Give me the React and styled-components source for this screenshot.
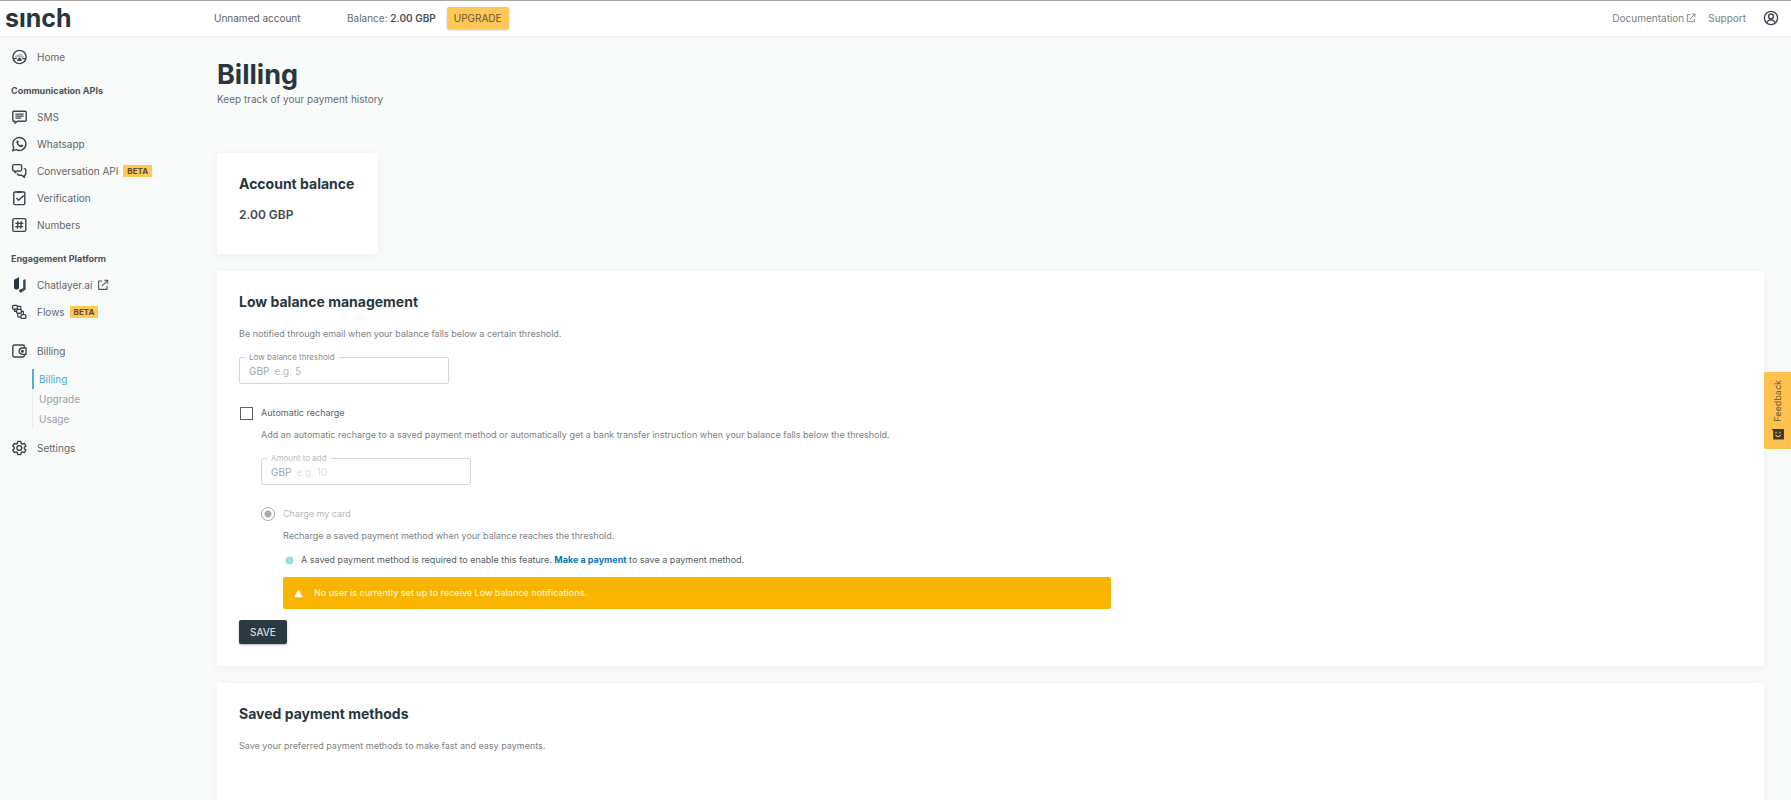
import React, { useState } from "react";
import styled, { createGlobalStyle } from "styled-components";

const GlobalStyle = createGlobalStyle`
	* {
		box-sizing: border-box;
	}

	body {
		margin: 0;
		background-color: #f9fafa;
		color: #666d70;
		font-family: Inter, "Liberation Sans", sans-serif;
		font-size: 10px;
		line-height: 14px;
	}

	a {
		color: inherit;
		text-decoration: none;
	}

	h1, h2, h3, p, ul {
		margin: 0;
		padding: 0;
	}

	button, input {
		font-family: inherit;
	}
`;

const Page = styled.div`
	display: flex;
	flex-direction: column;
	min-height: 100vh;
`;

const Header = styled.header`
	display: flex;
	align-items: center;
	height: 36px;
	padding: 0 12px 2px 5px;
	border-top: 1px solid #a9a7a8;
	background-color: #fff;
	box-shadow: 0 1px 2px rgba(40, 55, 62, 0.06);
`;

const Logo = styled.a`
	width: 209px;
	color: #28373e;
	font-size: 25px;
	font-weight: 700;
	line-height: 32px;
`;

const AccountName = styled.span`
	width: 133px;
	color: #5b6367;
	font-size: 10px;
`;

const Balance = styled.span`
	margin-right: 11px;
	font-size: 10px;

	strong {
		color: #4a5357;
		font-weight: 600;
	}
`;

const UpgradeButton = styled.button`
	height: 22px;
	padding: 0 7px;
	border: none;
	border-radius: 2px;
	background-color: #ffc658;
	color: #6b5a36;
	font-size: 10px;
	box-shadow: 0 1px 2px rgba(0, 0, 0, 0.25);
`;

const HeaderLinks = styled.nav`
	display: flex;
	align-items: center;
	gap: 12px;
	margin-left: auto;
	color: #7b8184;
`;

const HeaderLink = styled.a`
	display: flex;
	align-items: center;
	gap: 2px;
`;

const ProfileButton = styled.button`
	display: flex;
	margin-left: 5px;
	padding: 0;
	border: none;
	background: none;
	color: #3c484e;
`;

const Body = styled.div`
	display: flex;
	flex: 1;
`;

const Sidebar = styled.nav`
	flex: none;
	width: 217px;
	padding: 7px 11px;
`;

const NavItem = styled.a`
	display: flex;
	align-items: center;
	height: 27px;
	margin-top: ${(props) => (props.$spaced ? "12px" : "0")};
	color: #5f676a;

	> svg:first-child {
		flex: none;
		margin-right: 10px;
		color: #39464c;
	}
`;

const NavHeading = styled.h3`
	padding: 14px 0 6px;
	color: #4a5458;
	font-size: 9px;
	font-weight: 700;
	line-height: 13px;
`;

const Beta = styled.span`
	margin-left: 5px;
	padding: 0 4px;
	background-color: #ffc658;
	color: #5c4d2c;
	font-size: 8px;
	font-weight: 700;
	line-height: 12px;
`;

const ExternalMark = styled.span`
	display: flex;
	margin-left: 5px;
	color: #4a5458;
`;

const SubNav = styled.ul`
	margin: 5px 0 5px 21px;
	list-style: none;
`;

const SubNavLink = styled.a`
	display: block;
	padding-left: ${(props) => (props.$active ? "5px" : "6px")};
	border-left: ${(props) =>
		props.$active ? "2px solid #55abd6" : "1px solid #e9ebec"};
	color: ${(props) => (props.$active ? "#4ba5d3" : "#999fa1")};
	line-height: 20px;
`;

const Main = styled.main`
	display: flex;
	flex: 1;
	flex-direction: column;
	min-width: 0;
	padding: 22px 27px 0 0;
`;

const Title = styled.h1`
	color: #28373e;
	font-size: 27px;
	font-weight: 700;
	line-height: 34px;
`;

const Subtitle = styled.p`
	margin-bottom: 47px;
`;

const Card = styled.section`
	align-self: ${(props) => (props.$fit ? "flex-start" : "stretch")};
	flex: ${(props) => (props.$grow ? "1" : "none")};
	margin-bottom: ${(props) => (props.$grow ? "0" : "17px")};
	padding: ${(props) => (props.$fit ? "22px 24px 31px 22px" : "22px")};
	background-color: #fff;
	box-shadow: 0 2px 10px rgba(40, 55, 62, 0.05);
`;

const CardTitle = styled.h2`
	margin-bottom: 12px;
	color: #28373e;
	font-size: 14px;
	font-weight: 700;
	line-height: 18px;
`;

const Amount = styled.p`
	padding-top: 2px;
	color: #3f4b50;
	font-size: 12px;
	font-weight: 600;
	line-height: 16px;
`;

const Text = styled.p`
	padding-top: ${(props) => (props.$tight ? "0" : "4px")};
	color: #7c8285;
	font-size: 9px;
	line-height: 14px;
`;

const Field = styled.div`
	position: relative;
	display: flex;
	align-items: center;
	width: 210px;
	height: 27px;
	margin-top: 16px;
	padding: 0 9px;
	border: 1px solid #d4d7d8;
	border-radius: 2px;
	color: #a0a5a7;
`;

const FieldLabel = styled.label`
	position: absolute;
	top: -6px;
	left: 5px;
	padding: 0 4px;
	background-color: #fff;
	color: ${(props) => (props.$disabled ? "#b9bdbe" : "#8b9193")};
	font-size: 8px;
	line-height: 10px;
`;

const FieldInput = styled.input`
	flex: 1;
	min-width: 0;
	padding: 0 0 0 5px;
	border: none;
	outline: none;
	background: none;
	color: #4a5458;
	font-size: 10px;

	&::placeholder {
		color: ${(props) => (props.disabled ? "#dddfe0" : "#b4b8ba")};
		opacity: 1;
	}
`;

const Choice = styled.label`
	display: flex;
	align-items: center;
	gap: 8px;
	margin-top: 22px;
	color: ${(props) => (props.$disabled ? "#b4b8ba" : "#5b6367")};
	font-size: 9px;
	line-height: 14px;
`;

const Checkbox = styled.input`
	appearance: none;
	width: 13px;
	height: 13px;
	margin: 0 0 0 1px;
	border: 1px solid #596266;
	background-color: ${(props) => (props.checked ? "#596266" : "#fff")};
`;

const Radio = styled.input`
	appearance: none;
	width: 14px;
	height: 14px;
	margin: 0;
	border: 1px solid #a6abad;
	border-radius: 50%;
	background: radial-gradient(circle, #a6abad 3px, #fff 4px);
`;

const Indent = styled.div`
	max-width: 850px;
	margin-top: 8px;
	margin-left: 22px;
`;

const InfoLine = styled.p`
	display: flex;
	align-items: center;
	gap: 7px;
	margin: 10px 0 10px 2px;
	color: #555d61;
	font-size: 9px;

	a {
		color: #0a76b8;
		font-weight: 700;
	}
`;

const Alert = styled.div`
	display: flex;
	align-items: center;
	gap: 11px;
	height: 32px;
	padding: 0 11px;
	border-radius: 2px;
	background-color: #f9b402;
	color: #fff1cd;
	font-size: 9px;
	font-weight: 500;
`;

const SaveButton = styled.button`
	height: 24px;
	margin-top: 11px;
	padding: 0 11px;
	border: none;
	border-radius: 2px;
	background-color: #2b3a41;
	color: #d8dcde;
	font-size: 10px;
	font-weight: 500;
	box-shadow: 0 1px 2px rgba(0, 0, 0, 0.3);
`;

const FeedbackTab = styled.button`
	position: fixed;
	top: 372px;
	right: 0;
	display: flex;
	flex-direction: column;
	align-items: center;
	justify-content: space-between;
	width: 27px;
	height: 77px;
	padding: 8px 0 9px;
	border: none;
	border-radius: 2px 0 0 2px;
	background-color: #ffc24f;
	color: #6c5b37;
	font-size: 9px;

	span {
		writing-mode: vertical-rl;
		transform: rotate(180deg);
	}
`;

const Icon = ({ size = 16, children }) => (
	<svg
		width={size}
		height={size}
		viewBox="0 0 16 16"
		fill="none"
		stroke="currentColor"
		strokeWidth="1.4"
		strokeLinejoin="round"
		aria-hidden="true"
	>
		{children}
	</svg>
);

const HomeIcon = () => (
	<Icon>
		<circle cx="8.5" cy="8" r="6.6" />
		<path d="M4 7.6Q8.5 2 13 7.6v1.2H4z" fill="#b5bbbe" stroke="none" />
		<path d="M2.4 9.6h3.4M11.2 9.6h3.4" strokeWidth="1.2" />
		<path d="M6.4 12V10.2l2.1-1.6 2.1 1.6V12z" fill="currentColor" stroke="none" />
	</Icon>
);

const SmsIcon = () => (
	<Icon>
		<path d="M2.8 2.2h11.4a1 1 0 0 1 1 1v8a1 1 0 0 1-1 1H6.4l-2.4 2v-2H2.8a1 1 0 0 1-1-1v-8a1 1 0 0 1 1-1z" />
		<path d="M4.4 5.2h8.2M4.4 7.2h8.2M4.4 9.2h5.8" strokeWidth="1.3" />
	</Icon>
);

const WhatsappIcon = () => (
	<Icon>
		<path d="M1.8 14.7l1-3.4a6.5 6.5 0 1 1 2.5 2.4z" />
		<path
			d="M5.7 4.7c.6-.7 1.3-.5 1.5.1l.5 1.2c.1.5-.5.8-.6 1.2.5 1 1.3 1.7 2.4 2.1.4-.2.7-.8 1.1-.7l1.3.7c.5.3.2 1.2-.4 1.5-2.8 1.4-7.2-3-5.8-6.1z"
			fill="currentColor"
			stroke="none"
		/>
	</Icon>
);

const ConversationIcon = () => (
	<Icon>
		<path d="M3 1.6h6.2a1.4 1.4 0 0 1 1.4 1.4v3.6A1.4 1.4 0 0 1 9.2 8H6L4 9.8V8H3a1.4 1.4 0 0 1-1.4-1.4V3A1.4 1.4 0 0 1 3 1.6z" />
		<path d="M12.8 5.6h.6A1.4 1.4 0 0 1 14.8 7v3.8a1.4 1.4 0 0 1-1.4 1.4v2.2l-2.6-2.2H8a1.6 1.6 0 0 1-1.6-1.6v-.4" />
	</Icon>
);

const VerificationIcon = () => (
	<Icon>
		<rect x="2.8" y="2" width="11" height="12.6" rx="1" />
		<path d="M5.8 2h5" strokeWidth="2" />
		<path d="M5.4 8l2.2 2.2 5-4.8" />
	</Icon>
);

const NumbersIcon = () => (
	<Icon>
		<rect x="1.8" y="1.6" width="13" height="12.8" rx="1.4" />
		<path d="M7 4.2l-.6 7.6M10.4 4.2l-.6 7.6M4.4 6.4h8M4.2 9.6h8" strokeWidth="1.4" />
	</Icon>
);

const ChatlayerIcon = () => (
	<Icon>
		<path d="M3 2.8L8 .2v11.2l-2.4 1.4L3 11.6z" fill="#26364a" stroke="none" />
		<path d="M12.2 3l2.4-.8v10.4l-4.8 3.2-1.6-1v-2l4-1.6z" fill="#39464c" stroke="none" />
	</Icon>
);

const FlowsIcon = () => (
	<Icon>
		<rect x="1.6" y="1.4" width="4.8" height="3.8" rx="1" />
		<rect x="5.6" y="5.4" width="4.8" height="3.8" rx="1" />
		<rect x="10" y="10.6" width="4.8" height="3.8" rx="1" />
		<path d="M6.4 2.4h3.4v3M3.6 5.2v2.2h2M10.4 7.4h2v3.2M6.8 9.2v3.6H10" strokeWidth="1.2" />
	</Icon>
);

const WalletIcon = () => (
	<Icon>
		<path d="M13.4 5V3.4A1.4 1.4 0 0 0 12 2H3.2a1.4 1.4 0 0 0-1.4 1.4v9.2A1.4 1.4 0 0 0 3.2 14H12a1.4 1.4 0 0 0 1.4-1.4v-1.2" />
		<path d="M15 5h-3.6a3.2 3.2 0 0 0 0 6.4H15z" />
		<circle cx="11.4" cy="8.2" r="0.8" fill="currentColor" />
	</Icon>
);

const SettingsIcon = () => (
	<Icon>
		<path d="M6.9 1.4h2.8l.5 1.9 1.3.8 1.9-.6 1.4 2.4-1.4 1.4v1.4l1.4 1.4-1.4 2.4-1.9-.6-1.3.8-.5 1.9H6.9l-.5-1.9-1.3-.8-1.9.6-1.4-2.4 1.4-1.4V7.3L1.8 5.9l1.4-2.4 1.9.6 1.3-.8z" />
		<circle cx="8.3" cy="8" r="2.4" />
	</Icon>
);

const ExternalIcon = ({ size }) => (
	<Icon size={size}>
		<path d="M7 2.6H2.2v11.2h11.2V9.4M9.6 1.6h4.8v4.8M14.2 1.8L6.4 9.6" />
	</Icon>
);

const ProfileIcon = () => (
	<Icon>
		<circle cx="8" cy="8" r="6.6" />
		<circle cx="8" cy="6.4" r="2.4" />
		<path d="M3.6 12.6Q5.4 9.8 8 9.8t4.4 2.8" />
	</Icon>
);

const InfoIcon = () => (
	<Icon size={9}>
		<circle cx="8" cy="8" r="6.6" fill="#8fdbdb" stroke="#a5e2e2" />
		<path d="M8 7v4.4M8 4.2v1.6" stroke="#e8f9f9" />
	</Icon>
);

const WarningIcon = () => (
	<Icon size={9}>
		<path d="M8 2l6.6 12H1.4z" fill="#fff" stroke="#fff" />
	</Icon>
);

const SmileyIcon = () => (
	<Icon size={12}>
		<path d="M.8 2h14.4v12.6H2.4V3.8z" fill="#3b3a31" stroke="#3b3a31" />
		<path d="M5.4 5v2.2M10.6 5v2.2M4.6 9.4q3.4 3.6 6.8 0" stroke="#ffc24f" />
	</Icon>
);

const communicationItems = [
	{ name: "SMS", icon: <SmsIcon /> },
	{ name: "Whatsapp", icon: <WhatsappIcon /> },
	{ name: "Conversation API", icon: <ConversationIcon />, beta: true },
	{ name: "Verification", icon: <VerificationIcon /> },
	{ name: "Numbers", icon: <NumbersIcon /> },
];

const billingPages = ["Billing", "Upgrade", "Usage"];

const SideNav = () => (
	<Sidebar>
		<NavItem href="#home">
			<HomeIcon />
			Home
		</NavItem>
		<NavHeading>Communication APIs</NavHeading>
		{communicationItems.map((item) => (
			<NavItem key={item.name} href="#api">
				{item.icon}
				{item.name}
				{item.beta && <Beta>BETA</Beta>}
			</NavItem>
		))}
		<NavHeading>Engagement Platform</NavHeading>
		<NavItem href="#chatlayer">
			<ChatlayerIcon />
			Chatlayer.ai
			<ExternalMark>
				<ExternalIcon size={12} />
			</ExternalMark>
		</NavItem>
		<NavItem href="#flows">
			<FlowsIcon />
			Flows
			<Beta>BETA</Beta>
		</NavItem>
		<NavItem href="#billing" $spaced>
			<WalletIcon />
			Billing
		</NavItem>
		<SubNav>
			{billingPages.map((page) => (
				<li key={page}>
					<SubNavLink href="#billing" $active={page === "Billing"}>
						{page}
					</SubNavLink>
				</li>
			))}
		</SubNav>
		<NavItem href="#settings">
			<SettingsIcon />
			Settings
		</NavItem>
	</Sidebar>
);

const MoneyField = ({ id, label, placeholder, disabled }) => (
	<Field>
		<FieldLabel htmlFor={id} $disabled={disabled}>
			{label}
		</FieldLabel>
		GBP
		<FieldInput id={id} type="text" placeholder={placeholder} disabled={disabled} />
	</Field>
);

const LowBalanceCard = () => {
	const [recharge, setRecharge] = useState(false);

	return (
		<Card>
			<CardTitle>Low balance management</CardTitle>
			<Text>
				Be notified through email when your balance falls below a certain
				threshold.
			</Text>
			<MoneyField id="threshold" label="Low balance threshold" placeholder="e.g. 5" />
			<Choice>
				<Checkbox
					type="checkbox"
					checked={recharge}
					onChange={(e) => setRecharge(e.target.checked)}
				/>
				Automatic recharge
			</Choice>
			<Indent>
				<Text $tight>
					Add an automatic recharge to a saved payment method or automatically
					get a bank transfer instruction when your balance falls below the
					threshold.
				</Text>
				<MoneyField
					id="amount"
					label="Amount to add"
					placeholder="e.g. 10"
					disabled={!recharge}
				/>
				<Choice $disabled={!recharge}>
					<Radio type="radio" name="method" defaultChecked disabled={!recharge} />
					Charge my card
				</Choice>
				<Indent>
					<Text $tight>
						Recharge a saved payment method when your balance reaches the
						threshold.
					</Text>
					<InfoLine>
						<InfoIcon />
						<span>
							A saved payment method is required to enable this feature.{" "}
							<a href="#payment">Make a payment</a> to save a payment method.
						</span>
					</InfoLine>
					<Alert role="alert">
						<WarningIcon />
						No user is currently set up to receive Low balance notifications.
					</Alert>
				</Indent>
			</Indent>
			<SaveButton type="button">SAVE</SaveButton>
		</Card>
	);
};

const App = () => {
	return (
		<Page>
			<GlobalStyle />
			<Header>
				<Logo href="#home">sınch</Logo>
				<AccountName>Unnamed account</AccountName>
				<Balance>
					Balance: <strong>2.00 GBP</strong>
				</Balance>
				<UpgradeButton type="button">UPGRADE</UpgradeButton>
				<HeaderLinks>
					<HeaderLink href="#docs">
						Documentation
						<ExternalIcon size={10} />
					</HeaderLink>
					<HeaderLink href="#support">Support</HeaderLink>
					<ProfileButton type="button" aria-label="Profile">
						<ProfileIcon />
					</ProfileButton>
				</HeaderLinks>
			</Header>
			<Body>
				<SideNav />
				<Main>
					<Title>Billing</Title>
					<Subtitle>Keep track of your payment history</Subtitle>
					<Card $fit>
						<CardTitle>Account balance</CardTitle>
						<Amount>2.00 GBP</Amount>
					</Card>
					<LowBalanceCard />
					<Card $grow>
						<CardTitle>Saved payment methods</CardTitle>
						<Text>
							Save your preferred payment methods to make fast and easy payments.
						</Text>
					</Card>
				</Main>
			</Body>
			<FeedbackTab type="button">
				<span>Feedback</span>
				<SmileyIcon />
			</FeedbackTab>
		</Page>
	);
};

export default App;
